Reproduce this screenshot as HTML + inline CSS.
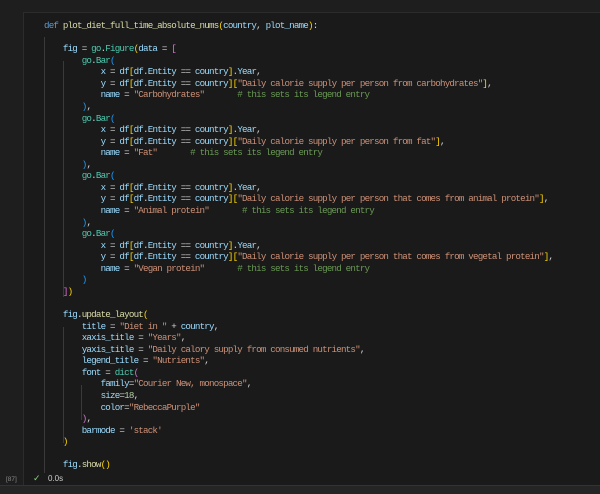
<!DOCTYPE html>
<html><head><meta charset="utf-8"><style>
body{margin:0;width:600px;height:493px;background:#1e1e1e;overflow:hidden;position:relative;font-family:"Liberation Mono",monospace}
.cell{position:absolute;left:23px;top:12px;width:600px;height:473px;background:#1a1a1a;border-top:1px solid #2c2c2c;border-left:1px solid #2c2c2c}
.bot{position:absolute;left:0;top:485px;width:600px;height:8px;background:#252526;border-top:1px solid #333}
pre{position:absolute;left:44px;top:20px;margin:0;font-size:9.2px;line-height:11.57px;letter-spacing:-0.8px;color:#d4d4d4;font-family:"Liberation Mono",monospace}
.g{position:absolute;width:1px;background:#3a3a3a}
.k{color:#569cd6}.f{color:#dcdcaa}.v{color:#9cdcfe}.s{color:#ce9178}.c{color:#6a9955}.t{color:#4ec9b0}.n{color:#b5cea8}
.y{color:#ffd700}.p{color:#da70d6}.b{color:#179fff}
.foot{position:absolute;top:474px;font-size:8px;font-family:"Liberation Sans",sans-serif}
</style></head><body>
<div class="cell"></div>
<div class="g" style="left:44px;top:37px;height:436px"></div>
<div class="g" style="left:63px;top:61px;height:236px"></div>
<div class="g" style="left:63px;top:327px;height:116px"></div>
<div class="g" style="left:81px;top:385px;height:35px"></div>
<pre><span class="k">def</span> <span class="f">plot_diet_full_time_absolute_nums</span><span class="y">(</span><span class="v">country</span>, <span class="v">plot_name</span><span class="y">)</span>:

    <span class="v">fig</span> = <span class="t">go</span>.<span class="t">Figure</span><span class="y">(</span><span class="v">data</span> = <span class="p">[</span>
        <span class="t">go</span>.<span class="t">Bar</span><span class="b">(</span>
            <span class="v">x</span> = <span class="v">df</span><span class="y">[</span><span class="v">df</span>.<span class="v">Entity</span> == <span class="v">country</span><span class="y">]</span>.<span class="v">Year</span>,
            <span class="v">y</span> = <span class="v">df</span><span class="y">[</span><span class="v">df</span>.<span class="v">Entity</span> == <span class="v">country</span><span class="y">][</span><span class="s">"Daily calorie supply per person from carbohydrates"</span><span class="y">]</span>,
            <span class="v">name</span> = <span class="s">"Carbohydrates"</span>       <span class="c"># this sets its legend entry</span>
        <span class="b">)</span>,
        <span class="t">go</span>.<span class="t">Bar</span><span class="b">(</span>
            <span class="v">x</span> = <span class="v">df</span><span class="y">[</span><span class="v">df</span>.<span class="v">Entity</span> == <span class="v">country</span><span class="y">]</span>.<span class="v">Year</span>,
            <span class="v">y</span> = <span class="v">df</span><span class="y">[</span><span class="v">df</span>.<span class="v">Entity</span> == <span class="v">country</span><span class="y">][</span><span class="s">"Daily calorie supply per person from fat"</span><span class="y">]</span>,
            <span class="v">name</span> = <span class="s">"Fat"</span>       <span class="c"># this sets its legend entry</span>
        <span class="b">)</span>,
        <span class="t">go</span>.<span class="t">Bar</span><span class="b">(</span>
            <span class="v">x</span> = <span class="v">df</span><span class="y">[</span><span class="v">df</span>.<span class="v">Entity</span> == <span class="v">country</span><span class="y">]</span>.<span class="v">Year</span>,
            <span class="v">y</span> = <span class="v">df</span><span class="y">[</span><span class="v">df</span>.<span class="v">Entity</span> == <span class="v">country</span><span class="y">][</span><span class="s">"Daily calorie supply per person that comes from animal protein"</span><span class="y">]</span>,
            <span class="v">name</span> = <span class="s">"Animal protein"</span>       <span class="c"># this sets its legend entry</span>
        <span class="b">)</span>,
        <span class="t">go</span>.<span class="t">Bar</span><span class="b">(</span>
            <span class="v">x</span> = <span class="v">df</span><span class="y">[</span><span class="v">df</span>.<span class="v">Entity</span> == <span class="v">country</span><span class="y">]</span>.<span class="v">Year</span>,
            <span class="v">y</span> = <span class="v">df</span><span class="y">[</span><span class="v">df</span>.<span class="v">Entity</span> == <span class="v">country</span><span class="y">][</span><span class="s">"Daily calorie supply per person that comes from vegetal protein"</span><span class="y">]</span>,
            <span class="v">name</span> = <span class="s">"Vegan protein"</span>       <span class="c"># this sets its legend entry</span>
        <span class="b">)</span>
    <span class="p">]</span><span class="y">)</span>

    <span class="v">fig</span>.<span class="f">update_layout</span><span class="y">(</span>
        <span class="v">title</span> = <span class="s">"Diet in "</span> + <span class="v">country</span>,
        <span class="v">xaxis_title</span> = <span class="s">"Years"</span>,
        <span class="v">yaxis_title</span> = <span class="s">"Daily calory supply from consumed nutrients"</span>,
        <span class="v">legend_title</span> = <span class="s">"Nutrients"</span>,
        <span class="v">font</span> = <span class="t">dict</span><span class="p">(</span>
            <span class="v">family</span>=<span class="s">"Courier New, monospace"</span>,
            <span class="v">size</span>=<span class="n">18</span>,
            <span class="v">color</span>=<span class="s">"RebeccaPurple"</span>
        <span class="p">)</span>,
        <span class="v">barmode</span> = <span class="s">'stack'</span>
    <span class="y">)</span>

    <span class="v">fig</span>.<span class="f">show</span><span class="y">()</span></pre>
<div class="foot" style="left:6px;color:#888;font-size:6.5px;top:476px">[87]</div>
<div class="foot" style="left:33px;color:#89d185;font-size:9px;top:473px">✓</div>
<div class="foot" style="left:48px;color:#ccc">0.0s</div>
<div class="bot"></div>
</body></html>
